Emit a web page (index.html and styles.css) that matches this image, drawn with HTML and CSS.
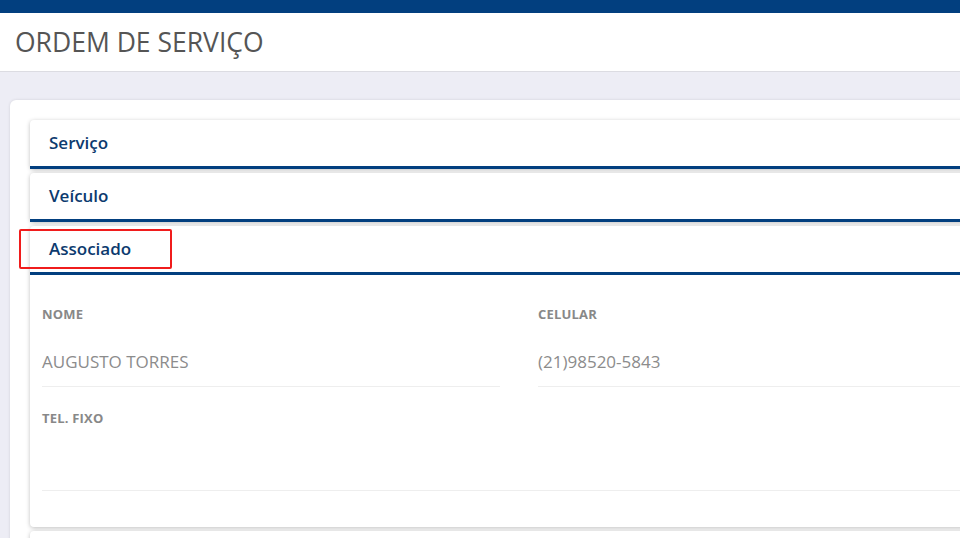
FILE: index.html
```html
<!DOCTYPE html>
<html lang="pt-BR">
<head>
    <meta charset="UTF-8">
    <meta name="viewport" content="width=device-width, initial-scale=1.0">
    <title>Ordem de Serviço</title>
    <link rel="stylesheet" href="styles.css">
</head>
<body>
    <div class="topbar"></div>

    <header class="page-header">
        <h1>ORDEM DE SERVIÇO</h1>
    </header>

    <main class="content">
        <div class="card">
            <section class="panel">
                <div class="panel-heading">Serviço</div>
            </section>

            <section class="panel">
                <div class="panel-heading">Veículo</div>
            </section>

            <section class="panel">
                <div class="panel-heading">
                    Associado
                    <span class="highlight"></span>
                </div>
                <div class="panel-body">
                    <div class="field">
                        <label>NOME</label>
                        <div class="field-value">AUGUSTO TORRES</div>
                    </div>
                    <div class="field">
                        <label>CELULAR</label>
                        <div class="field-value">(21)98520-5843</div>
                    </div>
                    <div class="field field-wide">
                        <label>TEL. FIXO</label>
                        <div class="field-value"></div>
                    </div>
                </div>
            </section>

            <!-- next section, collapsed -->
            <section class="panel">
                <div class="panel-heading"></div>
            </section>
        </div>
    </main>
</body>
</html>
```

FILE: styles.css
```css
html, body {
    overflow: hidden;
}
body {
    margin: 0;
    font-family: "Open Sans", Arial, sans-serif;
    background-color: #ededf5;
    min-width: 1100px;
}
.topbar {
    height: 13px;
    background-color: #023f7f;
}
.page-header {
    height: 58px;
    background: white;
    border-bottom: 1px solid #dcdce2;
    display: flex;
    align-items: center;
    padding-left: 15px;
}
.page-header h1 {
    margin: 0;
    font-size: 26.5px;
    font-weight: 400;
    color: #555;
}
.content {
    padding: 28px 0 0 10px;
}
.card {
    width: 978px;
    background: white;
    border-radius: 6px;
    padding: 20px;
    box-shadow: 0 0 3px rgba(0,0,0,0.12);
    display: flex;
    flex-direction: column;
    gap: 4px;
}
.panel {
    background: white;
    border-radius: 4px;
    box-shadow: 0 1px 4px rgba(0,0,0,0.25);
}
.panel-heading {
    position: relative;
    height: 44px;
    padding-bottom: 2px;
    display: flex;
    align-items: center;
    padding-left: 19px;
    border-bottom: 3px solid #023f7f;
    color: #0c3a6e;
    font-size: 17px;
    font-weight: 600;
}
.highlight {
    position: absolute;
    left: -11px;
    top: 3px;
    width: 149px;
    height: 36px;
    border: 2px solid #f01c1c;
    border-radius: 2px;
}
.panel-body {
    display: grid;
    grid-template-columns: 458px 458px;
    column-gap: 38px;
    padding: 30px 12px 14px;
}
.field {
    margin-bottom: 22px;
}
.field-wide {
    grid-column: 1 / -1;
}
.field label {
    display: block;
    height: 18px;
    line-height: 18px;
    font-size: 13px;
    font-weight: 700;
    letter-spacing: 0.2px;
    color: #888;
    margin-bottom: 17px;
}
.field-value {
    height: 46px;
    line-height: 44px;
    border-bottom: 1px solid #eeeeee;
    font-size: 17px;
    color: #8c8c8c;
}
```
